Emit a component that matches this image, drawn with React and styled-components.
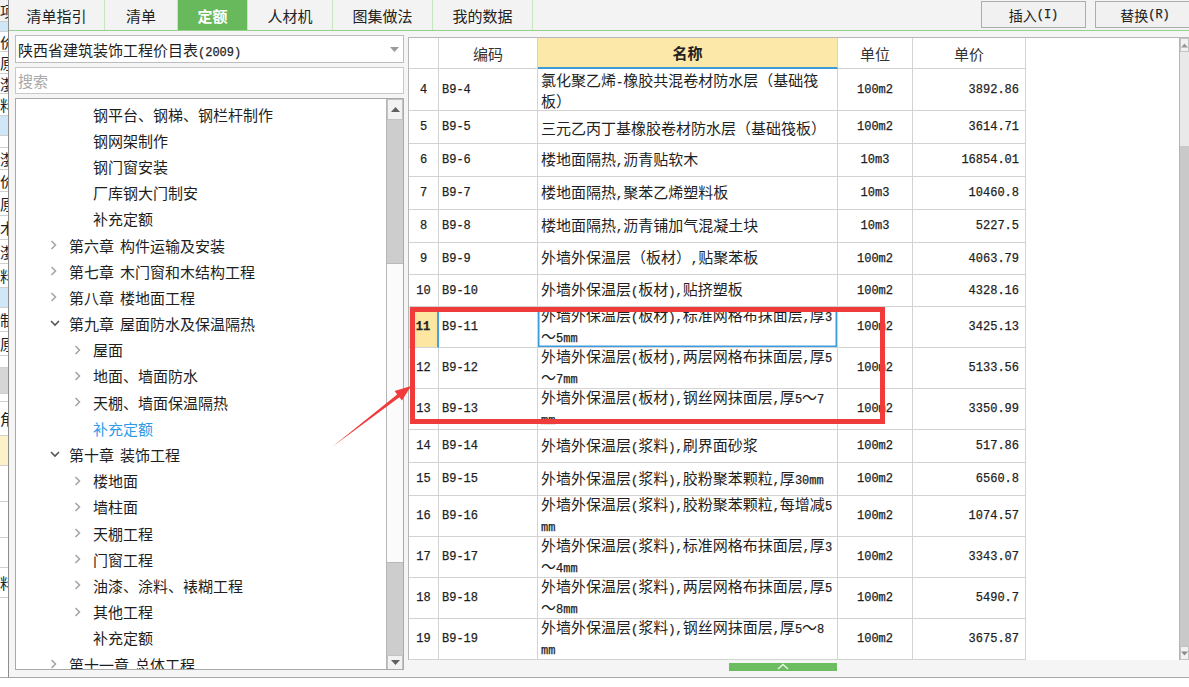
import React from 'react';
import styled, { createGlobalStyle, css } from 'styled-components';

const GlobalStyle = createGlobalStyle`
  html, body { margin: 0; padding: 0; background: #fff; }
  body { font-family: "Noto Sans CJK SC", "Noto Sans", sans-serif; color: #1f1f1f; }
  * { box-sizing: border-box; }
`;

const Page = styled.div`
  position: relative;
  width: 1189px;
  height: 687px;
  overflow: hidden;
  display: flex;
  align-items: flex-start;
  background: #fff;
`;

const Strip = styled.div`
  width: 9px;
  height: 678px;
  flex: none;
  border-right: 1px solid #8c8c8c;
  border-bottom: 1px solid #a8a8a8;
  display: flex;
  flex-direction: column;
  overflow: hidden;
  background: #fff;
`;

const StripCell = styled.div`
  height: ${(p) => p.h}px;
  flex: none;
  background: ${(p) => p.bg || '#fff'};
  border-bottom: 1px solid #cfcfcf;
  font-size: 15px;
  line-height: ${(p) => p.h - 1}px;
  white-space: nowrap;
  overflow: hidden;
  color: #222;
`;

const Dialog = styled.div`
  flex: 1;
  height: 678px;
  display: flex;
  flex-direction: column;
  background: #f5f5f5;
  border-bottom: 1px solid #a8a8a8;
`;

const TabBar = styled.div`
  height: 31px;
  flex: none;
  display: flex;
  background: #f3f3f3;
  border-bottom: 1px solid #93d18d;
  overflow: hidden;
`;

const Tab = styled.div`
  width: ${(p) => p.w}px;
  flex: none;
  display: flex;
  align-items: center;
  justify-content: center;
  font-size: 15px;
  color: #222;
  border-right: 1px solid #c6e6c0;
  ${(p) =>
    p.active &&
    css`
      background: #67b95b;
      color: #fff;
      font-weight: 700;
    `}
`;

const ToolButton = styled.div`
  width: ${(p) => p.w}px;
  height: 27px;
  margin-top: 1px;
  margin-left: ${(p) => p.ml}px;
  margin-right: ${(p) => p.mr || 0}px;
  flex: none;
  display: flex;
  align-items: center;
  justify-content: center;
  border: 1px solid #adadad;
  background: #f1f1f1;
  font-size: 14px;
  color: #222;
`;

const Asc = styled.span`
  font-family: "Liberation Mono", monospace;
  font-size: 12px;
  -webkit-text-stroke: 0.25px currentColor;
`;

const Body = styled.div`
  flex: 1;
  display: flex;
  min-height: 0;
`;

const LeftPanel = styled.div`
  width: 396px;
  flex: none;
  display: flex;
  flex-direction: column;
  gap: 4px;
  padding: 4px 1px 7px 6px;
`;

const Select = styled.div`
  height: 28px;
  flex: none;
  display: flex;
  align-items: center;
  justify-content: space-between;
  padding: 0 4px 0 2px;
  background: #fff;
  border: 1px solid #bdbdbd;
  font-size: 15px;
  color: #1f1f1f;
`;

const Search = styled.div`
  height: 27px;
  flex: none;
  display: flex;
  align-items: center;
  padding-left: 2px;
  background: #fff;
  border: 1px solid #c9c9c9;
  font-size: 15px;
  color: #a8a8a8;
`;

const TreeBox = styled.div`
  flex: 1;
  min-height: 0;
  display: flex;
  background: #fff;
  border: 1px solid #a9a9a9;
  overflow: hidden;
`;

const TreeList = styled.div`
  flex: 1;
  padding-top: 2px;
  overflow: hidden;
`;

const TreeRow = styled.div`
  height: 26.2px;
  display: flex;
  align-items: center;
  padding-left: ${(p) => (p.level === 1 ? 34 : 58)}px;
  font-size: 15px;
  color: ${(p) => (p.blue ? '#2f9be8' : '#1e1e1e')};
  white-space: nowrap;
`;

const Twisty = styled.span`
  width: 19px;
  flex: none;
  display: flex;
  align-items: center;
`;

const Gap = styled.span`
  display: inline-block;
  width: 6px;
`;

const ScrollCol = styled.div`
  width: ${(p) => p.w}px;
  flex: none;
  display: flex;
  flex-direction: column;
  background: #cdcdcd;
  border-left: 1px solid #b5b5b5;
`;

const ScrollSeg = styled.div`
  height: ${(p) => p.h}px;
  flex: none;
  background: ${(p) => p.bg};
  ${(p) => p.thumb && css`border-top: 1px solid #b9b9b9; border-bottom: 1px solid #b9b9b9;`}
`;

const ArrowBtn = styled.div`
  height: ${(p) => p.h}px;
  flex: none;
  background: #f2f2f2;
  border: 1px solid #c3c3c3;
  display: flex;
  align-items: center;
  justify-content: ${(p) => p.justify || 'center'};
`;

const RightPanel = styled.div`
  flex: 1;
  display: flex;
  flex-direction: column;
  padding: 6px 0 0 3px;
  min-width: 0;
`;

const GridWrap = styled.div`
  height: 623px;
  flex: none;
  display: flex;
  background: #fff;
  border-top: 1px solid #b7b7b7;
  border-left: 1px solid #b7b7b7;
`;

const Grid = styled.div`
  flex: 1;
  overflow: hidden;
`;

const Row = styled.div`
  height: ${(p) => p.h}px;
  display: grid;
  grid-template-columns: 30px 99px 300px 75px 113px;
`;

const Cell = styled.div`
  display: flex;
  align-items: center;
  overflow: hidden;
  white-space: nowrap;
  border-right: 1px solid #d3d3d3;
  border-bottom: 1px solid #d3d3d3;
  font-size: 15px;
  color: #1f1f1f;
  justify-content: ${(p) => (p.align === 'center' ? 'center' : p.align === 'right' ? 'flex-end' : 'flex-start')};
  padding: ${(p) => (p.align === 'right' ? '0 6px 0 0' : p.align === 'left' ? '0 0 0 3px' : '0')};
  ${(p) =>
    p.head &&
    css`
      color: #333;
    `}
  ${(p) =>
    p.hot &&
    css`
      background: #fce8a8;
      font-weight: 700;
      color: #222;
      border-bottom: 2px solid #3b9ad7;
    `}
  ${(p) =>
    p.selNum &&
    css`
      background: #fde6a2;
      font-weight: 700;
      border-right: 2px solid #4aa2dd;
    `}
  ${(p) =>
    p.selCell &&
    css`
      box-shadow: inset 0 0 0 1.5px #3d9be0;
    `}
`;

const NameText = styled.div`
  display: flex;
  flex-direction: column;
  padding-left: 3px;
  line-height: 17px;
`;

const Num = styled.span`
  font-family: "Liberation Mono", monospace;
  font-size: 12px;
  -webkit-text-stroke: 0.25px currentColor;
  font-weight: ${(p) => (p.bold ? 700 : 400)};
`;

const BottomBand = styled.div`
  flex: 1;
  display: flex;
  align-items: flex-start;
  padding-left: 321px;
`;

const Handle = styled.div`
  width: 108px;
  height: 8px;
  margin-top: 3px;
  background: #6cbd5f;
  display: flex;
  justify-content: center;
`;

const RedBox = styled.div`
  position: absolute;
  left: 410px;
  top: 307px;
  width: 475px;
  height: 117px;
  border: 5px solid #f03b3b;
  pointer-events: none;
`;

const Overlay = styled.svg`
  position: absolute;
  left: 0;
  top: 0;
  pointer-events: none;
`;

const stripCells = [
  ['项', 22, '#f2f2f2'],
  ['', 10, '#cfe7f7'],
  ['价', 20],
  ['原', 22],
  ['漤', 20],
  ['料', 22],
  ['', 20, '#cfe7f7'],
  ['', 12],
  ['漤', 22],
  ['价', 22],
  ['原', 24],
  ['木', 24],
  ['漤', 24],
  ['料', 24],
  ['', 20, '#cfe7f7'],
  ['制', 24],
  ['原', 24],
  ['', 12],
  ['', 26, '#d6d6d6'],
  ['', 8],
  ['角', 34],
  ['', 30, '#fdf1c8'],
  ['', 36],
  ['', 36],
  ['', 30],
  ['料', 30],
  ['', 120],
];

const tree = [
  { level: 2, text: '钢平台、钢梯、钢栏杆制作' },
  { level: 2, text: '钢网架制作' },
  { level: 2, text: '钢门窗安装' },
  { level: 2, text: '厂库钢大门制安' },
  { level: 2, text: '补充定额' },
  { level: 1, tw: 'c', pre: '第六章', text: '构件运输及安装' },
  { level: 1, tw: 'c', pre: '第七章', text: '木门窗和木结构工程' },
  { level: 1, tw: 'c', pre: '第八章', text: '楼地面工程' },
  { level: 1, tw: 'o', pre: '第九章', text: '屋面防水及保温隔热' },
  { level: 2, tw: 'c', text: '屋面' },
  { level: 2, tw: 'c', text: '地面、墙面防水' },
  { level: 2, tw: 'c', text: '天棚、墙面保温隔热' },
  { level: 2, text: '补充定额', blue: true },
  { level: 1, tw: 'o', pre: '第十章', text: '装饰工程' },
  { level: 2, tw: 'c', text: '楼地面' },
  { level: 2, tw: 'c', text: '墙柱面' },
  { level: 2, tw: 'c', text: '天棚工程' },
  { level: 2, tw: 'c', text: '门窗工程' },
  { level: 2, tw: 'c', text: '油漆、涂料、裱糊工程' },
  { level: 2, tw: 'c', text: '其他工程' },
  { level: 2, text: '补充定额' },
  { level: 1, tw: 'c', pre: '第十一章', text: '总体工程' },
];

const rows = [
  { n: 4, code: 'B9-4', name: ['氯化聚乙烯-橡胶共混卷材防水层（基础筏', '板）'], unit: '100m2', price: '3892.86', h: 42 },
  { n: 5, code: 'B9-5', name: ['三元乙丙丁基橡胶卷材防水层（基础筏板）'], unit: '100m2', price: '3614.71', h: 33 },
  { n: 6, code: 'B9-6', name: ['楼地面隔热,沥青贴软木'], unit: '10m3', price: '16854.01', h: 33 },
  { n: 7, code: 'B9-7', name: ['楼地面隔热,聚苯乙烯塑料板'], unit: '10m3', price: '10460.8', h: 33 },
  { n: 8, code: 'B9-8', name: ['楼地面隔热,沥青铺加气混凝土块'], unit: '10m3', price: '5227.5', h: 33 },
  { n: 9, code: 'B9-9', name: ['外墙外保温层（板材）,贴聚苯板'], unit: '100m2', price: '4063.79', h: 32 },
  { n: 10, code: 'B9-10', name: ['外墙外保温层(板材),贴挤塑板'], unit: '100m2', price: '4328.16', h: 32 },
  { n: 11, code: 'B9-11', name: ['外墙外保温层(板材),标准网格布抹面层,厚3', '～5mm'], unit: '100m2', price: '3425.13', h: 41, sel: true },
  { n: 12, code: 'B9-12', name: ['外墙外保温层(板材),两层网格布抹面层,厚5', '～7mm'], unit: '100m2', price: '5133.56', h: 41 },
  { n: 13, code: 'B9-13', name: ['外墙外保温层(板材),钢丝网抹面层,厚5～7', 'mm'], unit: '100m2', price: '3350.99', h: 41 },
  { n: 14, code: 'B9-14', name: ['外墙外保温层(浆料),刷界面砂浆'], unit: '100m2', price: '517.86', h: 33 },
  { n: 15, code: 'B9-15', name: ['外墙外保温层(浆料),胶粉聚苯颗粒,厚30mm'], unit: '100m2', price: '6560.8', h: 33 },
  { n: 16, code: 'B9-16', name: ['外墙外保温层(浆料),胶粉聚苯颗粒,每增减5', 'mm'], unit: '100m2', price: '1074.57', h: 41 },
  { n: 17, code: 'B9-17', name: ['外墙外保温层(浆料),标准网格布抹面层,厚3', '～4mm'], unit: '100m2', price: '3343.07', h: 41 },
  { n: 18, code: 'B9-18', name: ['外墙外保温层(浆料),两层网格布抹面层,厚5', '～8mm'], unit: '100m2', price: '5490.7', h: 41 },
  { n: 19, code: 'B9-19', name: ['外墙外保温层(浆料),钢丝网抹面层,厚5～8', 'mm'], unit: '100m2', price: '3675.87', h: 41 },
];

function Mixed({ text }) {
  const parts = text.split(/([\x20-\x7e]+)/).filter(Boolean);
  return parts.map((p, i) => (/^[\x20-\x7e]+$/.test(p) ? <Asc key={i}>{p}</Asc> : <React.Fragment key={i}>{p}</React.Fragment>));
}

function Chevron({ open }) {
  return open ? (
    <svg width="10" height="7" viewBox="0 0 10 7">
      <polyline points="1,1 5,5 9,1" fill="none" stroke="#555" strokeWidth="1.6" />
    </svg>
  ) : (
    <svg width="7" height="10" viewBox="0 0 7 10">
      <polyline points="1.5,1 5.5,5 1.5,9" fill="none" stroke="#a3a3a3" strokeWidth="1.5" />
    </svg>
  );
}

function Tri({ dir, color = '#606060' }) {
  return (
    <svg width="9" height="5" viewBox="0 0 9 5">
      {dir === 'up' ? <polygon points="0,5 4.5,0 9,5" fill={color} /> : <polygon points="0,0 4.5,5 9,0" fill={color} />}
    </svg>
  );
}

export default function App() {
  return (
    <>
      <GlobalStyle />
      <Page>
        <Strip>
          {stripCells.map(([t, h, bg], i) => (
            <StripCell key={i} h={h} bg={bg}>
              {t}
            </StripCell>
          ))}
        </Strip>
        <Dialog>
          <TabBar>
            <Tab w={96}>清单指引</Tab>
            <Tab w={73}>清单</Tab>
            <Tab w={70} active>
              定额
            </Tab>
            <Tab w={85}>人材机</Tab>
            <Tab w={100}>图集做法</Tab>
            <Tab w={100}>我的数据</Tab>
            <ToolButton w={105} ml={448}>
              插入<Asc>(I)</Asc>
            </ToolButton>
            <ToolButton w={100} ml={9} mr={-20}>
              替换<Asc>(R)</Asc>
            </ToolButton>
          </TabBar>
          <Body>
            <LeftPanel>
              <Select>
                <span>
                  陕西省建筑装饰工程价目表<Asc>(2009)</Asc>
                </span>
                <Tri dir="down" color="#9a9a9a" />
              </Select>
              <Search>搜索</Search>
              <TreeBox>
                <TreeList>
                  {tree.map((it, i) => (
                    <TreeRow key={i} level={it.level} blue={it.blue}>
                      <Twisty>{it.tw && <Chevron open={it.tw === 'o'} />}</Twisty>
                      {it.pre && (
                        <>
                          {it.pre}
                          <Gap />
                        </>
                      )}
                      {it.text}
                    </TreeRow>
                  ))}
                </TreeList>
                <ScrollCol w={17}>
                  <ArrowBtn h={21}>
                    <Tri dir="up" />
                  </ArrowBtn>
                  <ScrollSeg h={143} bg="#cdcdcd" />
                  <ScrollSeg h={300} bg="#fbfbfb" thumb />
                  <ScrollSeg h={92} bg="#cdcdcd" />
                  <ArrowBtn h={15}>
                    <Tri dir="down" />
                  </ArrowBtn>
                </ScrollCol>
              </TreeBox>
            </LeftPanel>
            <RightPanel>
              <GridWrap>
                <Grid>
                  <Row h={31}>
                    <Cell head />
                    <Cell head align="center">编码</Cell>
                    <Cell head hot align="center">名称</Cell>
                    <Cell head align="center">单位</Cell>
                    <Cell head align="center">单价</Cell>
                  </Row>
                  {rows.map((r) => (
                    <Row key={r.n} h={r.h}>
                      <Cell align="center" selNum={r.sel}>
                        <Num bold={r.sel}>{r.n}</Num>
                      </Cell>
                      <Cell align="left">
                        <Num>{r.code}</Num>
                      </Cell>
                      <Cell selCell={r.sel}>
                        <NameText>
                          {r.name.map((l, i) => (
                            <span key={i}>
                              <Mixed text={l} />
                            </span>
                          ))}
                        </NameText>
                      </Cell>
                      <Cell align="center">
                        <Num>{r.unit}</Num>
                      </Cell>
                      <Cell align="right">
                        <Num>{r.price}</Num>
                      </Cell>
                    </Row>
                  ))}
                </Grid>
                <ScrollCol w={10}>
                  <ArrowBtn h={14} justify="flex-end">
                    <Tri dir="up" color="#9a9a9a" />
                  </ArrowBtn>
                  <ScrollSeg h={94} bg="#e9e9e9" />
                  <ScrollSeg h={500} bg="#c9c9c9" />
                  <ArrowBtn h={14} justify="flex-end">
                    <Tri dir="down" color="#8a8a8a" />
                  </ArrowBtn>
                </ScrollCol>
              </GridWrap>
              <BottomBand>
                <Handle>
                  <svg width="14" height="7" viewBox="0 0 14 7">
                    <polyline points="2,6 7,1.5 12,6" fill="none" stroke="#e8f5e6" strokeWidth="1.5" />
                  </svg>
                </Handle>
              </BottomBand>
            </RightPanel>
          </Body>
        </Dialog>
        <RedBox />
        <Overlay width="1189" height="687" viewBox="0 0 1189 687">
          <polygon
            points="332,447 399.4,397.2 402,400.6 411,386 394.6,391 397.2,394.4"
            fill="#ef3b3b"
          />
        </Overlay>
      </Page>
    </>
  );
}
